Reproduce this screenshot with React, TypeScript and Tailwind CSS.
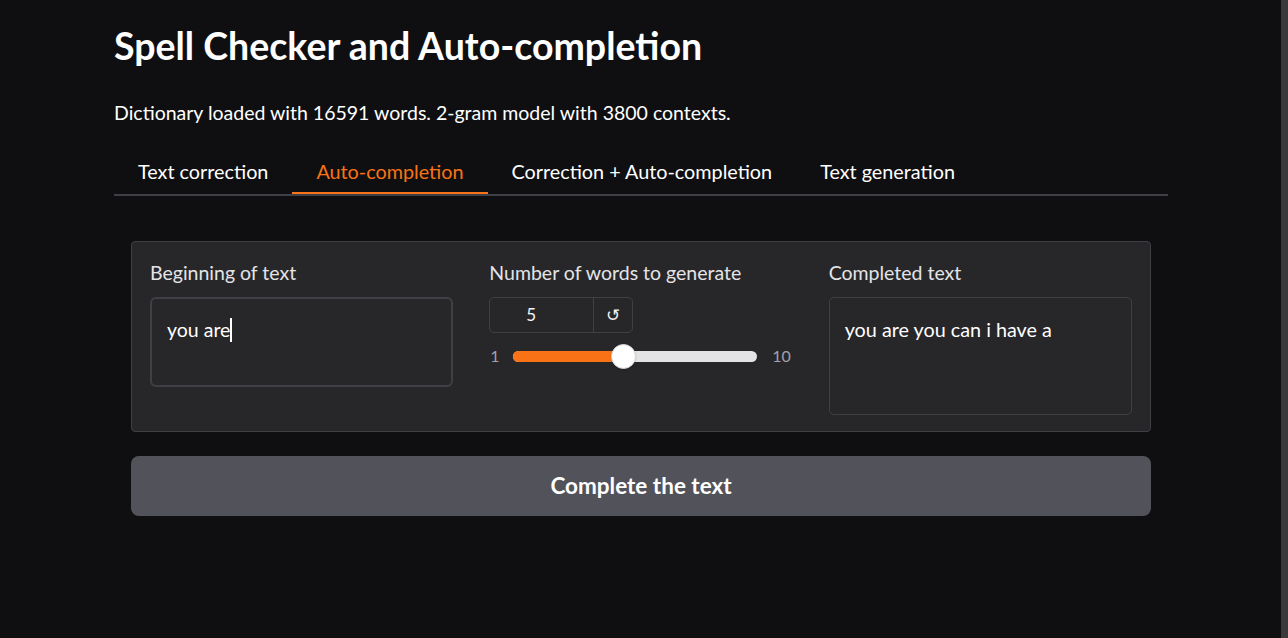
import React from "react";

export default function App() {
  const tabs = ["Text correction", "Auto-completion", "Correction + Auto-completion", "Text generation"];
  return (
    <div className="w-[1288px] h-[638px] bg-[#0f0f11] flex text-[#f4f4f5] overflow-hidden" style={{ fontFamily: "Lato, 'Noto Sans', sans-serif" }}>
      <div className="flex-1 pl-[114px] pr-[113px]">
        <h1 className="mt-[24px] text-[37.5px] font-bold leading-[44px] text-white">Spell Checker and Auto-completion</h1>
        <p className="mt-[31px] text-[19.5px] leading-[28px] text-white">Dictionary loaded with 16591 words. 2-gram model with 3800 contexts.</p>
        <div className="mt-[23px] flex border-b-2 border-[#3f3f46]">
          {tabs.map((t, i) => (
            <div
              key={t}
              className={
                i === 1
                  ? "px-[24px] h-[44px] pt-[2px] flex items-center text-[19.8px] text-[#f97316] border-b-2 border-[#f97316] -mb-[2px]"
                  : "px-[24px] h-[44px] flex items-center text-[19.8px] text-white"
              }
            >
              {t}
            </div>
          ))}
        </div>
        <div className="mt-[45px] mx-[17px]">
          <div className="bg-[#27272a] border border-[#3f3f46] rounded-[4px] px-[18px] pt-[18px] pb-[16px] grid grid-cols-3 gap-x-[36px]">
            <div>
              <div className="text-[19.5px] leading-[26px] text-[#e4e4e7]">Beginning of text</div>
              <div className="mt-[11px] h-[90px] border-2 border-[#3f3f46] rounded-[6px] px-[15px] pt-[17px] text-[19.5px] leading-[28px] text-white">
                you are<span className="inline-block w-[2px] h-[24px] bg-white align-middle -mt-[4px]"></span>
              </div>
            </div>
            <div>
              <div className="text-[19.5px] leading-[26px] text-[#e4e4e7]">Number of words to generate</div>
              <div className="mt-[11px] flex w-[144px] h-[36px] border border-[#3f3f46] rounded-[5px]">
                <div className="w-[104px] flex items-center pl-[36px] text-[17px] border-r border-[#3f3f46]">5</div>
                <div className="flex-1 flex items-center justify-center text-[17px]">↺</div>
              </div>
              <div className="mt-[9px] flex items-center h-[28px]">
                <span className="w-[24px] text-[16px] text-[#a1a1aa] pl-[1px]">1</span>
                <div className="relative w-[244px] h-[11px] rounded-full bg-[#e4e4e7]">
                  <div className="absolute left-0 top-0 h-full w-[110px] rounded-full bg-[#f97316]"></div>
                  <div className="absolute left-[98px] top-[-7px] w-[25px] h-[25px] rounded-full bg-white border border-[#d4d4d8] shadow"></div>
                </div>
                <span className="ml-[15px] text-[16px] text-[#a1a1aa]">10</span>
              </div>
            </div>
            <div>
              <div className="text-[19.5px] leading-[26px] text-[#e4e4e7]">Completed text</div>
              <div className="mt-[11px] h-[118px] border border-[#3f3f46] rounded-[5px] px-[15px] pt-[17px] text-[19.8px] leading-[28px] text-white">
                you are you can i have a
              </div>
            </div>
          </div>
          <button className="mt-[24px] w-full h-[60px] rounded-[8px] bg-[#52525b] text-white text-[22.5px] font-bold">Complete the text</button>
        </div>
      </div>
      <div className="w-[7px] bg-[#3a3a3c]"></div>
    </div>
  );
}
